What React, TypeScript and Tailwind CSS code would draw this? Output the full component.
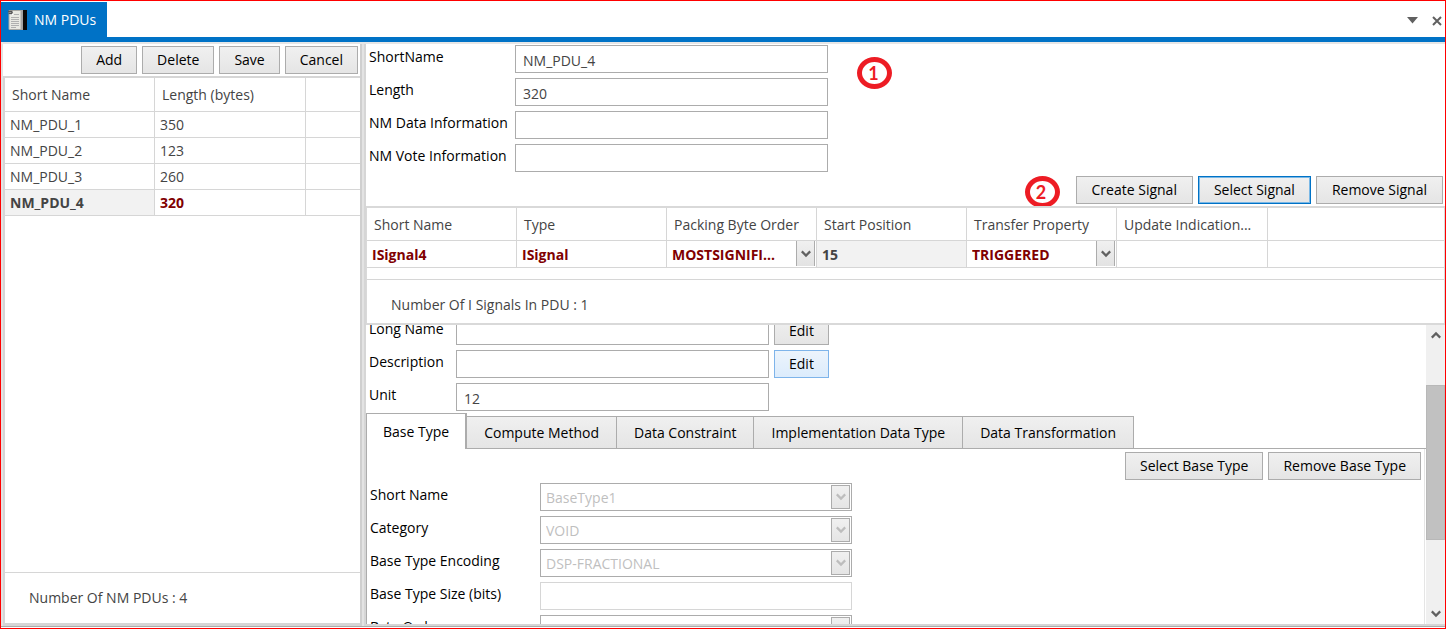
import { useState } from "react";
import type { ReactNode } from "react";

type ButtonTone = "normal" | "focused" | "hover";

const toneClass: Record<ButtonTone, string> = {
  normal: "border-[#acacac] bg-linear-to-b from-[#f0f0f0] to-[#e5e5e5]",
  focused: "border-[#0072c6] bg-linear-to-b from-[#f0f0f0] to-[#e5e5e5] inset-ring inset-ring-[#7ab8e6]",
  hover: "border-[#7eb4ea] bg-linear-to-b from-[#ecf4fc] to-[#dcecfc]",
};

function Button({ children, tone = "normal", wide = false }: { children: ReactNode; tone?: ButtonTone; wide?: boolean }) {
  return (
    <button type="button" className={`h-7 shrink-0 border whitespace-nowrap text-black ${wide ? "px-[15px]" : "px-[14px]"} ${toneClass[tone]}`}>
      {children}
    </button>
  );
}

function Chevron({ className = "", up = false }: { className?: string; up?: boolean }) {
  return (
    <svg viewBox="0 0 10 8" className={`h-2 w-[10px] ${className}`} fill="none" stroke="currentColor" strokeWidth="2.2" aria-hidden="true">
      <path d={up ? "M0.8 6.6 L5 2.4 L9.2 6.6" : "M0.8 1.4 L5 5.6 L9.2 1.4"} />
    </svg>
  );
}

function Marker({ children }: { children: ReactNode }) {
  return (
    <span className="flex h-8 w-[35px] items-center justify-center rounded-[50%] border-[5px] border-[#ed1c24] pr-0.5 pb-px font-['Lato',sans-serif] text-lg leading-none font-bold text-[#ed1c24]">
      {children}
    </span>
  );
}

function TextRow({ id, label, value = "", labelWidth, action }: { id: string; label: string; value?: string; labelWidth: string; action?: ReactNode }) {
  return (
    <div className="flex items-start">
      <label htmlFor={id} className={`shrink-0 leading-6 whitespace-nowrap text-black ${labelWidth}`}>{label}</label>
      <input id={id} defaultValue={value} className="mr-[5px] h-7 w-[313px] border border-[#acacac] bg-white px-[7px] pt-0.5 text-[#444] outline-none" />
      {action}
    </div>
  );
}

function DisabledSelectRow({ id, label, value }: { id: string; label: string; value: string }) {
  return (
    <div className="flex items-start">
      <label htmlFor={id} className="w-[170px] shrink-0 leading-6 text-black">{label}</label>
      <div className="relative w-[312px]">
        <select id={id} disabled defaultValue={value} className="h-7 w-full appearance-none border border-[#acacac] bg-white px-[5px] pt-0.5 text-[#bfbfbf] opacity-100">
          <option>{value}</option>
        </select>
        <span className="pointer-events-none absolute top-0.5 right-0.5 flex h-6 w-[19px] items-center justify-center border border-[#acacac] bg-linear-to-b from-[#f0f0f0] to-[#e5e5e5] text-[#bdbdbd]">
          <Chevron />
        </span>
      </div>
    </div>
  );
}

function CellSelect({ value, label }: { value: string; label: string }) {
  return (
    <div className="relative h-[26px]">
      <select aria-label={label} defaultValue={value} className="h-full w-full appearance-none bg-white pt-px pl-[5px] font-bold text-[#800000] outline-none">
        <option>{value}</option>
      </select>
      <span className="pointer-events-none absolute top-0 right-px flex h-[25px] w-[19px] items-center justify-center border-x border-[#acacac] bg-linear-to-b from-[#f0f0f0] to-[#e3e3e3] text-[#606060]">
        <Chevron />
      </span>
    </div>
  );
}

const pdus = [
  { name: "NM_PDU_1", length: "350" },
  { name: "NM_PDU_2", length: "123" },
  { name: "NM_PDU_3", length: "260" },
  { name: "NM_PDU_4", length: "320" },
];

const signalColumns = ["Short Name", "Type", "Packing Byte Order", "Start Position", "Transfer Property", "Update Indication..."];
const tabs = ["Base Type", "Compute Method", "Data Constraint", "Implementation Data Type", "Data Transformation"];
const headCell = "border-r border-b border-[#d6d6d6] pt-px pl-[7px] text-left font-normal whitespace-nowrap";
const bodyCell = "h-[26px] border-r border-b border-[#d6d6d6] pt-px pl-[5px] whitespace-nowrap";

function DocumentIcon() {
  return (
    <svg viewBox="0 0 20 20" className="h-5 w-5" aria-hidden="true">
      <rect x="15" y="0" width="5" height="20" fill="#0a0a0a" />
      <rect x="14" y="0" width="2" height="20" fill="#a4a4a4" />
      <path d="M2 .5h12v19H2z" fill="#e9e9e3" stroke="#a8a8a4" />
      <path d="M2 5 6 1v4z" fill="#fff" />
      <path d="M1 1.5h4.5M1.5 3.5h3l1-1.5" fill="none" stroke="#555" strokeWidth="1.4" />
      <path d="M7 4.5h5M4 7.5h8M4 9.5h8M4 11.5h8M4 13.5h8M4 15.5h8M4 17.5h5" stroke="#b0b0b0" />
    </svg>
  );
}

function PduPanel() {
  return (
    <section className="flex w-[359px] shrink-0 flex-col border-l-2 border-[#e3e3e3]">
      <div className="flex h-8 items-center justify-end gap-[5px] pr-0.5">
        <Button>Add</Button>
        <Button>Delete</Button>
        <Button>Save</Button>
        <Button>Cancel</Button>
      </div>
      <div className="flex min-h-0 flex-1 flex-col border-2 border-r-0 border-b-[3px] border-[#d6d6d6]">
        <table className="w-full table-fixed border-separate border-spacing-0">
          <colgroup>
            <col className="w-[150px]" />
            <col className="w-[151px]" />
            <col />
          </colgroup>
          <thead>
            <tr className="h-[34px]">
              <th className={headCell}>Short Name</th>
              <th className={headCell}>Length (bytes)</th>
              <th className="border-b border-[#d6d6d6]" />
            </tr>
          </thead>
          <tbody>
            {pdus.map((p) => {
              const selected = p.name === "NM_PDU_4";
              return (
                <tr key={p.name}>
                  <td className={`${bodyCell} ${selected ? "bg-[#f2f2f2] font-bold" : ""}`}>{p.name}</td>
                  <td className={`${bodyCell} ${selected ? "font-bold text-[#800000]" : ""}`}>{p.length}</td>
                  <td className="border-b border-[#d6d6d6]" />
                </tr>
              );
            })}
          </tbody>
        </table>
        <div className="mt-auto flex h-[51px] items-center border-t border-[#d6d6d6] pl-6">Number Of NM PDUs : 4</div>
      </div>
    </section>
  );
}

function SignalTable() {
  return (
    <div className="border-y-2 border-x border-[#d9d9d9]">
      <table className="w-full table-fixed border-separate border-spacing-0">
        <colgroup>
          <col className="w-[150px]" />
          <col className="w-[150px]" />
          <col className="w-[150px]" />
          <col className="w-[150px]" />
          <col className="w-[150px]" />
          <col className="w-[151px]" />
          <col />
        </colgroup>
        <thead>
          <tr className="h-[33px]">
            {signalColumns.map((c) => (
              <th key={c} className={headCell}>{c}</th>
            ))}
            <th className="border-b border-[#d6d6d6]" />
          </tr>
        </thead>
        <tbody className="font-bold">
          <tr>
            <td className={`${bodyCell} text-[#800000]`}>ISignal4</td>
            <td className={`${bodyCell} text-[#800000]`}>ISignal</td>
            <td className="border-r border-b border-[#d6d6d6]"><CellSelect label="Packing Byte Order" value="MOSTSIGNIFI..." /></td>
            <td className={`${bodyCell} bg-[#f2f2f2]`}>15</td>
            <td className="border-r border-b border-[#d6d6d6]"><CellSelect label="Transfer Property" value="TRIGGERED" /></td>
            <td className={bodyCell} />
            <td className="border-b border-[#d6d6d6]" />
          </tr>
        </tbody>
      </table>
      <div className="mt-[11px] flex h-11 items-center border-t border-[#d6d6d6] pt-1.5 pl-6">Number Of I Signals In PDU : 1</div>
    </div>
  );
}

function ScrollBar() {
  return (
    <div className="flex w-[19px] shrink-0 flex-col bg-[#f0f0f0] text-[#606060]">
      <button type="button" aria-label="Scroll up" className="flex h-5 items-center justify-center"><Chevron up /></button>
      <div className="flex-[40]" />
      <div className="flex-[154] border border-[#b8b8b8] bg-[#c1c1c1]" />
      <div className="flex-[64]" />
      <button type="button" aria-label="Scroll down" className="flex h-5 items-center justify-center"><Chevron /></button>
    </div>
  );
}

function SignalDetails() {
  const [active, setActive] = useState("Base Type");
  return (
    <div className="flex min-h-0 flex-1">
      <div className="min-w-0 flex-1 overflow-hidden">
        <div className="-mt-2 flex flex-col gap-[5px] pl-[3px]">
          <TextRow id="long-name" label="Long Name" labelWidth="w-[87px]" action={<Button>Edit</Button>} />
          <TextRow id="description" label="Description" labelWidth="w-[87px]" action={<Button tone="hover">Edit</Button>} />
          <TextRow id="unit" label="Unit" value="12" labelWidth="w-[87px]" />
        </div>
        <div role="tablist" className="mt-0.5 flex items-end border-b border-[#acacac]">
          {tabs.map((t) => (
            <button
              key={t}
              type="button"
              role="tab"
              aria-selected={t === active}
              onClick={() => setActive(t)}
              className={
                t === active
                  ? "-mb-px h-9 border border-r-2 border-b-0 border-[#acacac] bg-white px-4 whitespace-nowrap text-black"
                  : "h-8 border-t border-r border-[#acacac] bg-linear-to-b from-[#f0f0f0] to-[#e5e5e5] px-[17px] whitespace-nowrap text-black"
              }
            >
              {t}
            </button>
          ))}
        </div>
        <div className="mr-px border-x border-l-[#acacac] border-r-[#e5e5e5]">
          <div className="flex justify-end gap-[5px] pt-[3px] pr-[3px]">
            <Button>Select Base Type</Button>
            <Button>Remove Base Type</Button>
          </div>
          <div className="mt-[3px] flex flex-col gap-[5px] pl-[3px]">
            <DisabledSelectRow id="base-short-name" label="Short Name" value="BaseType1" />
            <DisabledSelectRow id="category" label="Category" value="VOID" />
            <DisabledSelectRow id="encoding" label="Base Type Encoding" value="DSP-FRACTIONAL" />
            <div className="flex items-start">
              <label htmlFor="size" className="w-[170px] shrink-0 leading-6 text-black">Base Type Size (bits)</label>
              <input id="size" disabled className="h-7 w-[312px] border border-[#d6d6d6] bg-white px-[7px]" />
            </div>
            <DisabledSelectRow id="byte-order" label="Byte Order" value="" />
          </div>
        </div>
      </div>
      <ScrollBar />
    </div>
  );
}

export default function App() {
  return (
    <div className="flex h-screen flex-col overflow-hidden border border-[#ff0000] bg-white font-['Open_Sans',sans-serif] text-sm text-[#444]">
      <header className="flex h-9 shrink-0 items-stretch justify-between pt-px">
        <div className="flex items-center gap-[7px] bg-[#0072c6] pt-px pr-[11px] pl-1.5 text-white">
          <DocumentIcon />
          <span>NM PDUs</span>
        </div>
        <div className="flex items-center gap-3.5 pt-0.5 pr-[3px] text-[#606060]">
          <button type="button" aria-label="Window menu">
            <svg viewBox="0 0 11 7" className="h-[7px] w-[11px]" aria-hidden="true"><path d="M0 0h11L5.5 6.5z" fill="currentColor" /></svg>
          </button>
          <button type="button" aria-label="Close">
            <svg viewBox="0 0 10 10" className="h-[10px] w-[10px]" aria-hidden="true"><path d="M1 1l8 8M9 1 1 9" stroke="currentColor" strokeWidth="2" /></svg>
          </button>
        </div>
      </header>
      <div className="h-[7px] shrink-0 border-b-2 border-[#e6e6e6] bg-[#0072c6]" />
      <main className="flex min-h-0 flex-1 border-b border-[#acacac]">
        <PduPanel />
        <div className="w-1.5 shrink-0 border-x-2 border-l-[#cfcfcf] border-r-[#d6d6d6] bg-[#e3e3e3]" />
        <section className="relative flex min-w-0 flex-1 flex-col border-b-2 border-[#d6d6d6]">
          <div className="flex flex-col gap-[5px] pt-px pl-[3px]">
            <TextRow id="short-name" label="ShortName" value="NM_PDU_4" labelWidth="w-[146px]" />
            <TextRow id="length" label="Length" value="320" labelWidth="w-[146px]" />
            <TextRow id="data-info" label="NM Data Information" labelWidth="w-[146px]" />
            <TextRow id="vote-info" label="NM Vote Information" labelWidth="w-[146px]" />
          </div>
          <div className="absolute top-[13px] left-[491px]"><Marker>1</Marker></div>
          <div className="mt-0.5 flex h-8 items-center justify-end gap-[5px] pr-0.5">
            <div className="mt-1 mr-[11px]"><Marker>2</Marker></div>
            <Button wide>Create Signal</Button>
            <Button wide tone="focused">Select Signal</Button>
            <Button wide>Remove Signal</Button>
          </div>
          <SignalTable />
          <SignalDetails />
        </section>
      </main>
      <div className="h-px shrink-0 bg-white" />
    </div>
  );
}
